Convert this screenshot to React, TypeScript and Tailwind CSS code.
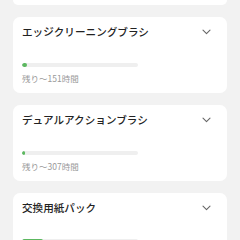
import React from "react";

const font = { fontFamily: '"Noto Sans CJK JP", "Noto Sans", sans-serif' };

function Chevron() {
  return (
    <svg width="9" height="6" viewBox="0 0 9 6" className="shrink-0">
      <path d="M1 1.2 L4.5 4.6 L8 1.2" fill="none" stroke="#666" strokeWidth="1.1" strokeLinecap="round" strokeLinejoin="round" />
    </svg>
  );
}

function Card({ title, fill, remain }: { title: string; fill: number; remain?: string }) {
  return (
    <div className="bg-white rounded-[7px] pl-[9px] pr-[16px] pt-[7px] pb-[8px] shrink-0">
      <div className="flex items-center justify-between h-[16px]">
        <span className="text-[10.6px] font-medium text-[#222] leading-[16px]">{title}</span>
        <Chevron />
      </div>
      <div className="mt-[23px] w-[116px] h-[4px] rounded-full bg-[#efefef] overflow-hidden">
        <div className="h-full rounded-full bg-[#5cb860]" style={{ width: fill }} />
      </div>
      {remain && <div className="mt-[4px] text-[8.5px] leading-[14px] text-[#9a9a9a]">{remain}</div>}
    </div>
  );
}

export default function App() {
  return (
    <div className="w-[240px] h-[240px] bg-[#f2f2f2] overflow-hidden px-[13px] flex flex-col gap-[12px]" style={font}>
      <div className="bg-white h-[5px] rounded-b-[7px] shrink-0" />
      <Card title="エッジクリーニングブラシ" fill={5} remain="残り～151時間" />
      <Card title="デュアルアクションブラシ" fill={3} remain="残り～307時間" />
      <Card title="交換用紙パック" fill={21} />
    </div>
  );
}
